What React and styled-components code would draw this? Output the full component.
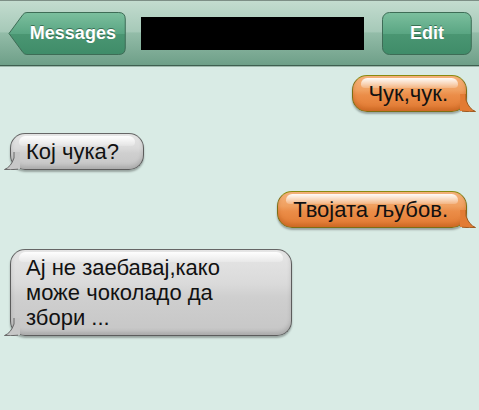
import styled, { createGlobalStyle } from "styled-components";

const GlobalStyle = createGlobalStyle`
  html, body {
    margin: 0;
    padding: 0;
    background: #d9ebe5;
  }
  body {
    font-family: "Liberation Sans", Arial, sans-serif;
  }
`;

const Page = styled.div`
  width: 479px;
  height: 410px;
  background: #d9ebe5;
  overflow: hidden;
`;

const Header = styled.div`
  height: 66px;
  box-sizing: border-box;
  display: flex;
  align-items: center;
  padding: 0 7px 0 8px;
  background: linear-gradient(#c3dccf 0%, #a6c9b8 48%, #93bca8 50%, #6e9f88 100%);
  border-top: 1px solid #7d8f86;
  border-bottom: 1px solid #3f5f50;
  box-shadow: 0 1px 0 #9fb9ad;
`;

const NavButton = styled.div`
  position: relative;
  height: 43px;
  display: flex;
  align-items: center;
  justify-content: center;
  width: ${(p) => p.width}px;
  padding-left: ${(p) => (p.back ? 12 : 0)}px;
  box-sizing: border-box;
  color: #fff;
  font-weight: bold;
  font-size: 18px;
  text-shadow: 0 -1px 0 rgba(30, 70, 50, 0.6);
  margin-top: 1px;

  span {
    position: relative;
  }
`;

const ButtonShape = styled.svg`
  position: absolute;
  inset: 0;
  width: 100%;
  height: 100%;
`;

const TitleBox = styled.div`
  width: 224px;
  height: 33px;
  background: #000;
  margin-left: 15px;
  margin-right: 18px;
  margin-top: 1px;
`;

const Thread = styled.div`
  display: flex;
  flex-direction: column;
  gap: 21px;
  padding: 9px 0 0;
`;

const Row = styled.div`
  display: flex;
  justify-content: ${(p) => (p.mine ? "flex-end" : "flex-start")};
  padding: ${(p) => (p.mine ? "0 12px 0 0" : "0 0 0 10px")};
`;

const Bubble = styled.div`
  position: relative;
  box-sizing: border-box;
  max-width: ${(p) => p.maxWidth || 400}px;
  padding: 5px ${(p) => p.padRight || 18}px 5px 15px;
  font-size: 22px;
  line-height: 25px;
  color: #111;
  border-radius: 15px;
  border: 1px solid ${(p) => (p.mine ? "#7d6e14" : "#5c5c5c")};
  border-top-color: ${(p) => (p.mine ? "#8a8a10" : "#666")};
  background: ${(p) =>
    p.mine
      ? "linear-gradient(#f5b27a 0%, #f0a060 40%, #eb8d48 55%, #e27a32 100%)"
      : "linear-gradient(#e6e6e6 0%, #dadada 40%, #cfcfcf 55%, #c6c6c6 100%)"};
  box-shadow: 0 2px 2px rgba(0, 0, 0, 0.3),
    inset 0 -3px 4px ${(p) => (p.mine ? "rgba(160,70,10,0.35)" : "rgba(0,0,0,0.15)")};

  &::before {
    content: "";
    position: absolute;
    left: 8px;
    right: 8px;
    top: 2px;
    height: 10px;
    border-radius: 10px 10px 6px 6px;
    background: linear-gradient(rgba(255, 255, 255, 0.95), rgba(255, 255, 255, 0.2));
  }

  span {
    position: relative;
  }
`;

const Tail = styled.svg`
  position: absolute;
  bottom: -1px;
  width: 16px;
  height: 18px;
  ${(p) => (p.mine ? "right: -10px;" : "left: -7px; transform: scaleX(-1);")}
`;

const BackShape = () => (
  <ButtonShape viewBox="0 0 118 43" preserveAspectRatio="none">
    <defs>
      <linearGradient id="btnGrad" x1="0" y1="0" x2="0" y2="1">
        <stop offset="0" stopColor="#7cbf9e" />
        <stop offset="0.5" stopColor="#5aa683" />
        <stop offset="0.52" stopColor="#4a9672" />
        <stop offset="1" stopColor="#3f8c69" />
      </linearGradient>
    </defs>
    <path
      d="M1 21.5 L15 2.5 Q16.5 0.5 19 0.5 L111 0.5 Q117.5 0.5 117.5 7 L117.5 36 Q117.5 42.5 111 42.5 L19 42.5 Q16.5 42.5 15 40.5 Z"
      fill="url(#btnGrad)"
      stroke="#3d6b55"
      strokeWidth="1"
    />
  </ButtonShape>
);

const EditShape = () => (
  <ButtonShape viewBox="0 0 90 43" preserveAspectRatio="none">
    <defs>
      <linearGradient id="btnGrad2" x1="0" y1="0" x2="0" y2="1">
        <stop offset="0" stopColor="#7cbf9e" />
        <stop offset="0.5" stopColor="#5aa683" />
        <stop offset="0.52" stopColor="#4a9672" />
        <stop offset="1" stopColor="#3f8c69" />
      </linearGradient>
    </defs>
    <rect x="0.5" y="0.5" width="89" height="42" rx="7" fill="url(#btnGrad2)" stroke="#3d6b55" />
  </ButtonShape>
);

const TailIcon = ({ mine }) => (
  <Tail mine={mine} viewBox="0 0 16 18">
    <path
      d="M0 0 Q1 12 -2 17 L2 17 Q10 18 15.5 17.5 Q9 15 6 6 L6 0 Z"
      fill={mine ? "#e37b33" : "#c7c7c7"}
    />
    <path
      d="M6 0 L6 6 Q9 15 15.5 17.5 Q10 18 2 17.2"
      fill="none"
      stroke={mine ? "#9c5a20" : "#666"}
      strokeWidth="1"
    />
  </Tail>
);

const messages = [
  { mine: true, text: "Чук,чук." },
  { mine: false, text: "Кој чука?", padRight: 24 },
  { mine: true, text: "Твојата љубов." },
  { mine: false, text: "Ај не заебавај,како може чоколадо да збори ...", maxWidth: 282 },
];

export default function App() {
  return (
    <Page>
      <GlobalStyle />
      <Header>
        <NavButton back width={118}>
          <BackShape />
          <span>Messages</span>
        </NavButton>
        <TitleBox />
        <NavButton width={90}>
          <EditShape />
          <span>Edit</span>
        </NavButton>
      </Header>
      <Thread>
        {messages.map((m, i) => (
          <Row key={i} mine={m.mine}>
            <Bubble mine={m.mine} maxWidth={m.maxWidth} padRight={m.padRight}>
              <span>{m.text}</span>
              <TailIcon mine={m.mine} />
            </Bubble>
          </Row>
        ))}
      </Thread>
    </Page>
  );
}
